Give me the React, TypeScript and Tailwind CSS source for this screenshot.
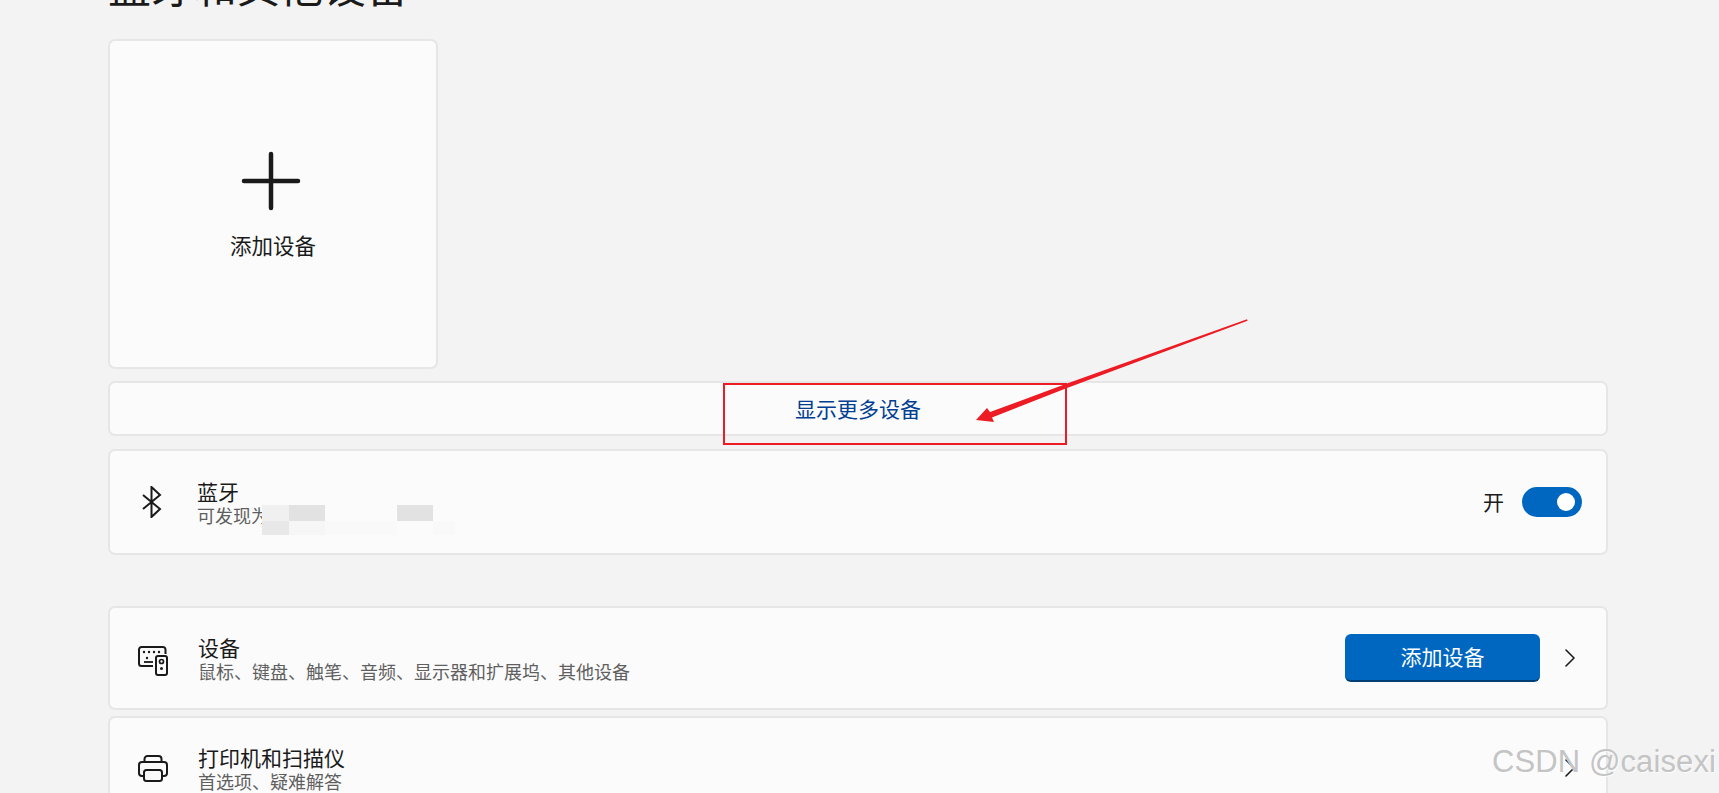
import { ChevronRight } from 'lucide-react';

const font = 'font-["Noto_Sans_CJK_SC","Microsoft_YaHei",sans-serif]';

function BluetoothIcon() {
  return (
    <svg width="20" height="32" viewBox="0 0 20 32" fill="none" stroke="#1a1a1a" strokeWidth="2" className="ml-[3px]">
      <path d="M1 9 L18 23 L9.5 31 V1 L18 9 L1 23" strokeLinejoin="miter" />
    </svg>
  );
}

function DevicesIcon() {
  return (
    <svg width="30" height="30" viewBox="0 0 30 30" fill="none" stroke="#1a1a1a" strokeWidth="2">
      <path d="M15 20 H3.5 A2.5 2.5 0 0 1 1 17.5 V3.5 A2.5 2.5 0 0 1 3.5 1 H25 A2.5 2.5 0 0 1 27.5 3.5 V8" />
      <rect x="18" y="10" width="11" height="19" rx="2" />
      <circle cx="23.5" cy="15.5" r="2" strokeWidth="1.7" />
      <circle cx="23.5" cy="22.5" r="1.5" fill="#1a1a1a" stroke="none" />
      <g fill="#1a1a1a" stroke="none">
        <circle cx="6" cy="6" r="1.2" />
        <circle cx="11" cy="6" r="1.2" />
        <circle cx="16" cy="6" r="1.2" />
        <circle cx="21" cy="6" r="1.2" />
        <circle cx="9" cy="12" r="1.2" />
      </g>
      <path d="M6 16 H15" strokeWidth="1.8" />
    </svg>
  );
}

function PrinterIcon() {
  return (
    <svg width="30" height="27" viewBox="0 0 30 27" fill="none" stroke="#1a1a1a" strokeWidth="2">
      <path d="M6.5 7 V4 A3 3 0 0 1 9.5 1 H20.5 A3 3 0 0 1 23.5 4 V7" />
      <path d="M6 21 H4 A3 3 0 0 1 1 18 V10 A3 3 0 0 1 4 7 H26 A3 3 0 0 1 29 10 V18 A3 3 0 0 1 26 21 H24" />
      <rect x="6" y="15" width="18" height="11" rx="2.5" />
    </svg>
  );
}

function RowText({ title, sub }: { title: string; sub: string }) {
  return (
    <div className="flex flex-col">
      <div className="text-[21px] leading-[27px] text-[#1a1a1a]">{title}</div>
      <div className="text-[18px] leading-[21px] text-[#5f5f5f]">{sub}</div>
    </div>
  );
}

const cardClass = 'border-2 border-[#e6e6e6] bg-[#fbfbfb] rounded-[7px]';

export default function App() {
  return (
    <div className={`relative h-[793px] w-full overflow-hidden bg-[#f3f3f3] ${font}`}>
      <div className="w-[1500px] ml-[108px] -mt-[44px] flex flex-col">
        <h1 className="h-[56px] mb-[27px] text-[43px] leading-[56px] font-normal text-[#1a1a1a] whitespace-nowrap">
          蓝牙和其他设备
        </h1>

        {/* Add device tile */}
        <div className={`${cardClass} w-[330px] h-[330px] flex flex-col items-center pt-[110px]`}>
          <svg width="60" height="60" viewBox="0 0 60 60" stroke="#1a1a1a" strokeWidth="4.5" strokeLinecap="round" className="-ml-[4px]">
            <path d="M30 3 V57 M3 30 H57" />
          </svg>
          <div className="mt-[19px] text-[21.5px] leading-[30px] text-[#1a1a1a]">添加设备</div>
        </div>

        {/* Show more */}
        <div className={`${cardClass} mt-[12px] h-[55px] flex items-center justify-center text-[21px] text-[#003e92]`}>
          显示更多设备
        </div>

        {/* Bluetooth */}
        <div className={`${cardClass} relative mt-[13px] h-[106px] flex items-center pl-[29px] pr-[24px]`}>
          <div className="w-[58px] flex"><BluetoothIcon /></div>
          <div className="flex flex-col -mt-[1px]">
            <div className="text-[21px] leading-[28px] text-[#1a1a1a]">蓝牙</div>
            <div className="text-[18px] leading-[21px] text-[#5f5f5f]">可发现为</div>
          </div>
          <div className="ml-auto flex items-center gap-[18px]">
            <span className="text-[21px] text-[#1a1a1a]">开</span>
            <div className="w-[60px] h-[30px] rounded-full bg-[#0067c0] flex items-center justify-end pr-[7px]">
              <div className="w-[18px] h-[18px] rounded-full bg-white" />
            </div>
          </div>
          {/* pixelated blur over the device name */}
          <div className="absolute left-[152px] top-[54px] w-[193px] h-[30px] flex flex-col">
            <div className="h-[16px] flex">
              <div className="w-[27px] bg-[#f0f0f0]" />
              <div className="w-[36px] bg-[#e2e2e2]" />
              <div className="w-[72px]" />
              <div className="w-[36px] bg-[#e2e2e2]" />
            </div>
            <div className="h-[14px] flex">
              <div className="w-[27px] bg-[#e8e8e8]" />
              <div className="w-[36px] bg-[#f6f6f6]" />
              <div className="w-[72px] bg-[#f9f9f9]" />
              <div className="w-[36px]" />
              <div className="w-[22px] bg-[#f9f9f9]" />
            </div>
          </div>
        </div>

        {/* Devices */}
        <div className={`${cardClass} mt-[51px] h-[104px] flex items-center pl-[28px] pr-[20px]`}>
          <div className="w-[60px] flex mt-[5px]"><DevicesIcon /></div>
          <RowText title="设备" sub="鼠标、键盘、触笔、音频、显示器和扩展坞、其他设备" />
          <button className="ml-auto w-[195px] h-[48px] rounded-[6px] bg-[#0067c0] border-b-2 border-[#003e73] text-[21px] text-white">
            添加设备
          </button>
          <ChevronRight className="ml-[14px] w-[32px] h-[32px] text-[#1a1a1a]" strokeWidth={1.2} />
        </div>

        {/* Printers */}
        <div className={`${cardClass} mt-[6px] h-[104px] flex items-center pl-[28px] pr-[20px]`}>
          <div className="w-[60px] flex"><PrinterIcon /></div>
          <div className="-mt-[1px]">
            <RowText title="打印机和扫描仪" sub="首选项、疑难解答" />
          </div>
          <ChevronRight className="ml-auto w-[32px] h-[32px] text-[#1a1a1a]" strokeWidth={1.2} />
        </div>
      </div>

      {/* Red annotation: box and arrow */}
      <div className="absolute left-[723px] top-[383px] w-[344px] h-[62px] border-2 border-[#ed1c24]" />
      <svg className="absolute left-[960px] top-[310px]" width="300" height="120" viewBox="0 0 300 120" fill="#ed1c24">
        <path d="M287 9.2 L107 73.6 L30 102 L27 98 L16 110 L34 112 L32 107.5 L107 78 L287.6 10.8 Z" />
      </svg>

      {/* Watermark */}
      <div className='absolute left-[1492px] top-[744px] font-["Liberation_Sans",sans-serif] text-[31px] leading-[36px] tracking-[0.1px] whitespace-nowrap text-[#c4c4c4] [text-shadow:1px_1px_1px_rgba(255,255,255,0.8)]'>
        CSDN @caisexi
      </div>
    </div>
  );
}
